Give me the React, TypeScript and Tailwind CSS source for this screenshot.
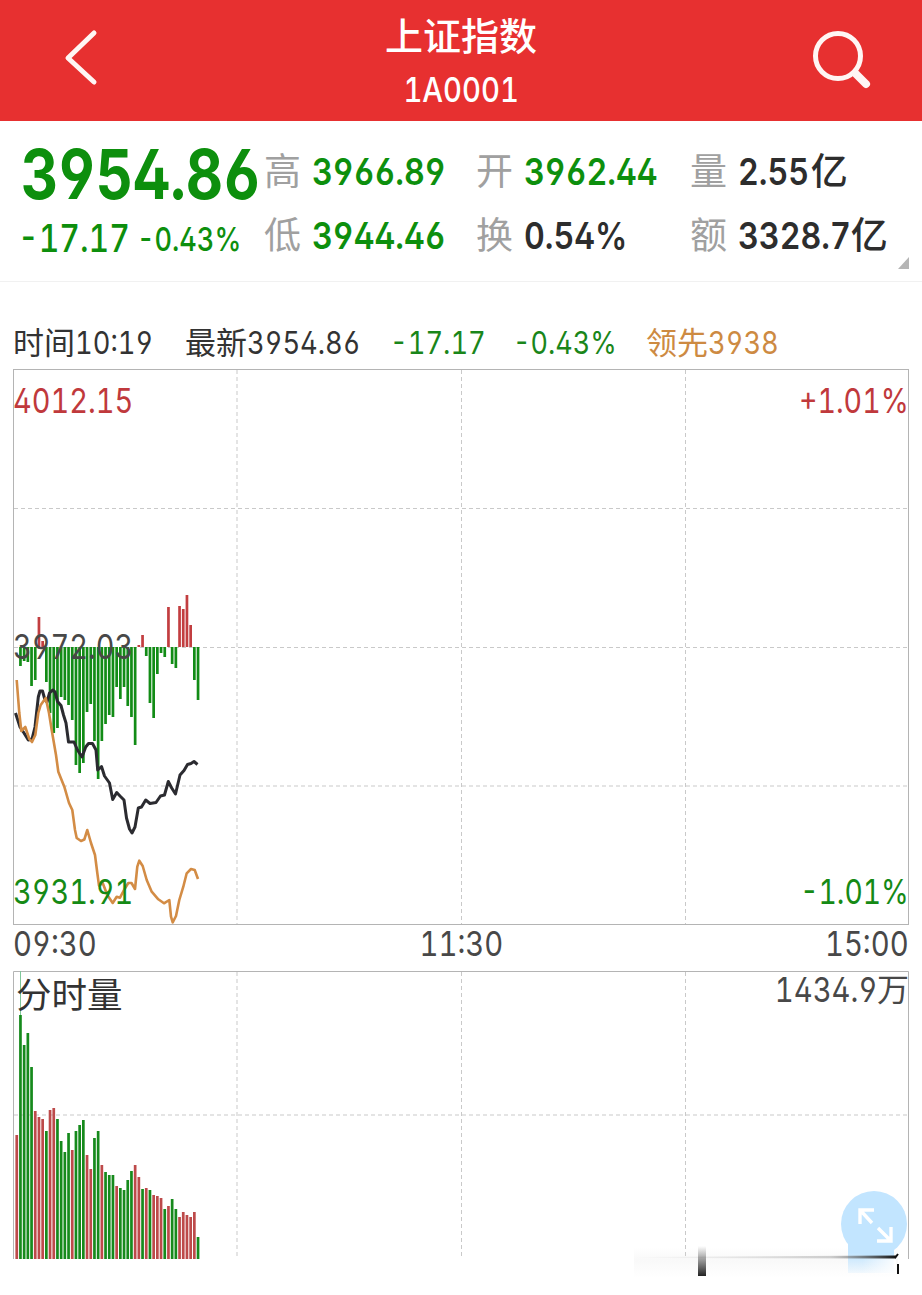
import React from 'react';
import clsx from 'clsx';

// minute bars around the previous close, positive = above the line
const momentum = [
  0, -19, -14, -15, -39, -33, 30, 6, -35, -66, -86, -81, -50, -53, -58, -73, -118, -126, -116, -65,
  -57, -94, -132, -94, -77, -68, -70, -40, -52, -40, -59, -70, -98, 2, 12, -9, -56, -71, -27, -6,
  -10, 40, -17, -21, 41, 38, 52, 22, -33, -53
];

const volumes: [number, 'r' | 'g'][] = [
  [124, 'r'], [244, 'g'], [214, 'g'], [226, 'g'], [192, 'g'], [148, 'r'], [142, 'r'], [140, 'r'], [128, 'g'], [149, 'r'],
  [151, 'r'], [140, 'g'], [118, 'g'], [107, 'g'], [126, 'g'], [109, 'r'], [128, 'g'], [134, 'g'], [139, 'g'], [104, 'r'],
  [90, 'r'], [121, 'g'], [128, 'g'], [94, 'r'], [87, 'g'], [84, 'g'], [84, 'g'], [73, 'r'], [71, 'g'], [69, 'g'],
  [79, 'g'], [88, 'g'], [94, 'r'], [82, 'r'], [70, 'g'], [71, 'r'], [69, 'g'], [64, 'r'], [63, 'r'], [61, 'r'],
  [50, 'g'], [53, 'r'], [60, 'g'], [50, 'g'], [42, 'r'], [47, 'r'], [44, 'r'], [42, 'r'], [47, 'r'], [22, 'g']
];

const priceLine =
  '15.5,713 20,727 24,733 28.3,740 32,739 35,727 38.3,697 40,691 42.5,691 45,700 47,702 49.5,693 52.7,690 55,692 57.5,701.5 61,705.5 63.5,715 66,723 68.5,742 74,742 77.5,750 82,757 85.7,747 88.5,743.5 92.5,743.5 96,750 97.7,770 101.5,766.5 104.5,776 109.5,783 112.7,799.5 116.7,792.5 120,796 124,800 126.5,818 129.5,829 132,833 135,827 138.3,808 141.5,807 145.7,800 150,803.5 156,802.5 160.5,796 164.5,795 168.3,781.5 171.7,788 175.5,794 180,775 184,770.5 187.5,764.5 191,763.5 194,761.5 197.5,764.5';

const leadLine =
  '16.7,680 19.3,713 21.3,731 25.3,727 29.3,739 32,742 35.3,735 38.3,713 40.7,705 45.7,698 49,713 51.7,730 56,755 58.3,771.7 64.3,786.7 69,803 72.3,810 75,830 76.7,838 81,841 84.3,839.5 87.3,830 91,843 95,855 97.3,873 99,885.7 102.7,883 107.3,895 112.7,903 116.7,896.7 120,897.7 124,890 128.3,883 131.5,883 135,889 137.3,866.7 139.3,860.7 142.7,866 146.7,880 151.7,891.7 158.3,899.3 164,903.3 169.3,900 171,916.7 172.7,922.3 176,916 179.3,900 183.3,886.7 186.7,873.3 191,869 194.7,870 198,879';

const barX = (i: number) => 15.4 + i * 3.7;

// digits, slightly condensed
function Num({ children, className }: { children: React.ReactNode; className?: string }) {
  return (
    <span className={clsx("inline-block whitespace-nowrap tabular-nums font-['Inter',sans-serif] [font-feature-settings:'cv02','cv03','cv04']", className)}>
      {children}
    </span>
  );
}

function Stat({ label, value, unit, green }: { label: string; value: string; unit?: string; green?: boolean }) {
  return (
    <div className="flex h-16 items-center">
      <span className="w-12 shrink-0 pb-[5px] text-[37px] leading-none text-[#a0a0a0]">{label}</span>
      <span className={clsx('flex items-center', green ? 'text-[#0d8f0d]' : 'text-[#2d2d2d]')}>
        <Num className="pb-0.5 text-[37px] leading-none font-semibold origin-left scale-x-[0.87]">{value}</Num>
        {unit && <span className={clsx('pb-[5px] text-[37px] leading-none font-medium', value.length > 4 ? '-ml-[17px]' : '-ml-[9px]')}>{unit}</span>}
      </span>
    </div>
  );
}

export default function App() {
  return (
    <div className="relative flex h-[1295px] w-[922px] flex-col overflow-hidden bg-white font-['Noto_Sans_CJK_SC',sans-serif]">
      <header className="flex h-[121px] shrink-0 items-center justify-between bg-[#e73030] text-white">
        <svg width="120" height="121" fill="none" stroke="#fff6f4" strokeWidth="5" strokeLinecap="round" strokeLinejoin="round">
          <path d="M94 33 L68 58 L94 82" />
        </svg>
        <div className="flex flex-col items-center pt-[3px]">
          <h1 className="text-[38px] leading-[52px] font-medium">上证指数</h1>
          <Num className="pt-1 text-[34px] leading-[52px] font-medium scale-x-[0.86]">1A0001</Num>
        </div>
        <svg width="120" height="121" fill="none" stroke="#fff6f4" strokeLinecap="round">
          <circle cx="36" cy="56" r="22.5" strokeWidth="5" />
          <path d="M54 74 L64 84" strokeWidth="8" />
        </svg>
      </header>

      <section className="relative flex h-[161px] shrink-0 border-b border-[#f1f1f1] pt-[19px]">
        <div className="flex w-[264px] shrink-0 flex-col pl-[21px] text-[#0d8f0d]">
          <Num className="h-[70px] text-[69px] leading-[68px] font-bold origin-left scale-x-[0.837]">3954.86</Num>
          <div className="-ml-[3px] flex h-[56px] items-center">
            <Num className="w-[119px] text-[38px] leading-none font-medium origin-left scale-x-[0.84]">-17.17</Num>
            <Num className="pt-0.5 text-[33px] leading-none font-medium origin-left scale-x-[0.82]">-0.43%</Num>
          </div>
        </div>
        <div className="w-[212px] shrink-0">
          <Stat label="高" value="3966.89" green />
          <Stat label="低" value="3944.46" green />
        </div>
        <div className="w-[214px] shrink-0">
          <Stat label="开" value="3962.44" green />
          <Stat label="换" value="0.54%" />
        </div>
        <div>
          <Stat label="量" value="2.55" unit="亿" />
          <Stat label="额" value="3328.7" unit="亿" />
        </div>
        <svg className="absolute right-[13px] bottom-3" width="11" height="12">
          <path d="M11 0 V12 H0 Z" fill="#b5b5b5" />
        </svg>
      </section>

      <div className="flex h-[87px] shrink-0 items-end pb-[5px] pl-[13px] text-[31px] leading-[42px] text-[#333]">
        <div className="flex w-[172px]">
          <span className="-mt-0.5">时间</span>
          <Num className="origin-left scale-x-[0.88]">10:19</Num>
        </div>
        <div className="flex w-[205px]">
          <span className="-mt-0.5">最新</span>
          <Num className="origin-left scale-x-[0.88]">3954.86</Num>
        </div>
        <Num className="w-[123px] origin-left scale-x-[0.88] text-[#1a861a]">-17.17</Num>
        <Num className="w-[133px] origin-left scale-x-[0.87] text-[#1a861a]">-0.43%</Num>
        <div className="flex text-[#cd8a42]">
          <span className="-mt-0.5">领先</span>
          <Num className="origin-left scale-x-[0.88]">3938</Num>
        </div>
      </div>

      <div className="relative ml-[13px] h-[556px] w-[896px] shrink-0">
        <svg className="absolute inset-0" width="896" height="556" viewBox="13 369 896 556" fill="none">
          <g stroke="#c9c9c9" strokeDasharray="4 3">
            <path d="M237 370V924M461.5 370V924M685.5 370V924" />
            <path d="M14 508.5H908M14 647.5H908M14 786H908" />
          </g>
          <rect x="13.5" y="369.5" width="895" height="555" stroke="#b4b4b4" />
          {momentum.map((v, i) => (
            <rect key={i} x={barX(i)} y={v > 0 ? 647 - v : 647} width="2.7" height={Math.abs(v)} fill={v > 0 ? '#c23e40' : '#128c16'} />
          ))}
          <polyline points={priceLine} stroke="#2b2b30" strokeWidth="3" strokeLinejoin="round" />
          <polyline points={leadLine} stroke="#d38c45" strokeWidth="2.6" strokeLinejoin="round" />
        </svg>
        <div className="relative flex h-full flex-col justify-between text-[34px] leading-[50px]">
          <div className="flex justify-between pt-[7px] text-[#c0393c]">
            <Num className="origin-left scale-x-[0.85]">4012.15</Num>
            <Num className="origin-right scale-x-[0.84]">+1.01%</Num>
          </div>
          <Num className="self-start text-[#484848] origin-left scale-x-[0.85]">3972.03</Num>
          <div className="flex justify-between pb-2 text-[#158a15]">
            <Num className="origin-left scale-x-[0.85]">3931.91</Num>
            <Num className="origin-right scale-x-[0.83]">-1.01%</Num>
          </div>
        </div>
      </div>

      <div className="ml-[13px] grid h-[46px] w-[896px] shrink-0 grid-cols-3 items-center pb-2 text-[34px] leading-none text-[#484848]">
        <Num className="origin-left scale-x-[0.86]">09:30</Num>
        <Num className="text-center scale-x-[0.86]">11:30</Num>
        <Num className="text-right origin-right scale-x-[0.86]">15:00</Num>
      </div>

      <div className="relative ml-[13px] h-[289px] w-[896px] shrink-0">
        <svg className="absolute inset-0" width="896" height="289" viewBox="13 971 896 289" fill="none">
          <g stroke="#c9c9c9" strokeDasharray="4 3">
            <path d="M237 972V1259M461.5 972V1259M685.5 972V1259" />
            <path d="M14 1115H908" />
          </g>
          <path d="M13.5 1259V971.5H908.5V1259" stroke="#b4b4b4" />
          <path d="M20.5 971V1015" stroke="#7fc79a" />
          {volumes.map(([v, c], i) => (
            <rect key={i} x={barX(i)} y={1259 - v} width="2.7" height={v} fill={c === 'r' ? '#bd4a4a' : '#168a1c'} />
          ))}
        </svg>
        <div className="relative flex items-start justify-between pl-[3px]">
          <span className="text-[35.5px] leading-[44px] text-[#333]">分时量</span>
          <div className="flex text-[34px] leading-[38px] text-[#484848]">
            <Num className="origin-right scale-x-[0.86]">1434.9</Num>
            <span className="-mt-[3px] text-[32px]">万</span>
          </div>
        </div>
      </div>

      <svg className="absolute right-0 bottom-0" width="322" height="125" viewBox="0 0 322 125" fill="none">
        <defs>
          <linearGradient id="streak" x1="0" x2="1" y1="0" y2="0">
            <stop offset="0" stopColor="#999" stopOpacity="0" />
            <stop offset="0.75" stopColor="#888" stopOpacity="0.4" />
            <stop offset="1" stopColor="#111" />
          </linearGradient>
          <linearGradient id="stub" x1="0" x2="0" y1="0" y2="1">
            <stop offset="0" stopColor="#333" stopOpacity="0" />
            <stop offset="1" stopColor="#222" />
          </linearGradient>
          <linearGradient id="tail" x1="0" x2="0" y1="0" y2="1">
            <stop offset="0" stopColor="#c2e5ff" />
            <stop offset="0.35" stopColor="#c2e5ff" />
            <stop offset="1" stopColor="#c2e5ff" stopOpacity="0.2" />
          </linearGradient>
          <linearGradient id="tailFade" x1="0" x2="1" y1="0" y2="0">
            <stop offset="0.3" stopColor="#fff" stopOpacity="0" />
            <stop offset="1" stopColor="#fff" stopOpacity="0.9" />
          </linearGradient>
          <linearGradient id="haze" x1="0" x2="0" y1="0" y2="1">
            <stop offset="0" stopColor="#ddd" stopOpacity="0" />
            <stop offset="0.4" stopColor="#ddd" stopOpacity="0.18" />
            <stop offset="1" stopColor="#ddd" stopOpacity="0" />
          </linearGradient>
        </defs>
        <rect x="34" y="78" width="264" height="30" fill="url(#haze)" />
        <circle cx="274" cy="54" r="33" fill="#c2e5ff" />
        <rect x="248" y="72" width="46" height="31" fill="url(#tail)" />
        <rect x="248" y="87" width="48" height="17" fill="url(#tailFade)" />
        <path d="M36 87L296 85.5V88.5L36 88Z" fill="url(#streak)" />
        <rect x="98" y="76" width="8" height="30" fill="url(#stub)" />
        <path d="M295 88L298 84M298 94V104" stroke="#111" strokeWidth="2" />
        <g stroke="#fff" strokeWidth="3.4">
          <path d="M260 54V40H274M261 41L272 53" />
          <path d="M291 57V71H277M290 70L278 58" />
        </g>
      </svg>
    </div>
  );
}
